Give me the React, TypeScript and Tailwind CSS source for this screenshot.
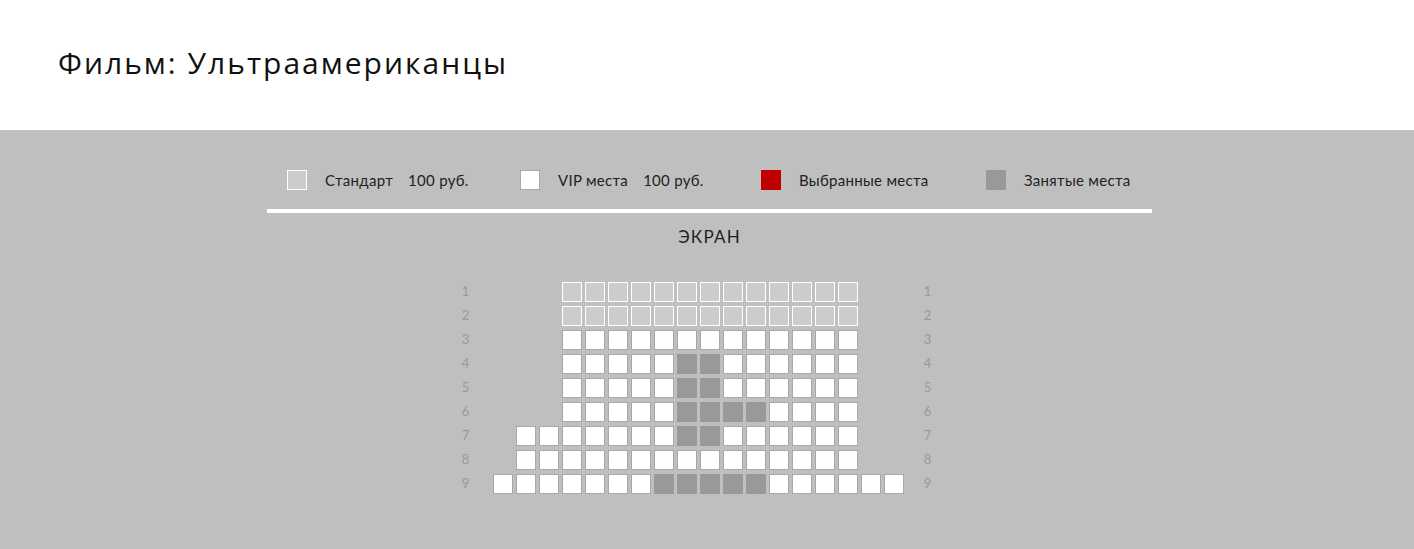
type SeatKind = 'none' | 'standart' | 'vip' | 'taken';

// 18 columns per row; each row lists its first/last column, the kind and the taken columns
const ROWS: { from: number; to: number; kind: SeatKind; taken?: number[] }[] = [
  { from: 4, to: 16, kind: 'standart' },
  { from: 4, to: 16, kind: 'standart' },
  { from: 4, to: 16, kind: 'vip' },
  { from: 4, to: 16, kind: 'vip', taken: [9, 10] },
  { from: 4, to: 16, kind: 'vip', taken: [9, 10] },
  { from: 4, to: 16, kind: 'vip', taken: [9, 10, 11, 12] },
  { from: 2, to: 16, kind: 'vip', taken: [9, 10] },
  { from: 2, to: 16, kind: 'vip' },
  { from: 1, to: 18, kind: 'vip', taken: [8, 9, 10, 11, 12] },
];

const COLS = Array.from({ length: 18 }, (_, i) => i + 1);

const SEAT_CLASS: Record<SeatKind, string> = {
  none: 'w-5 h-5',
  standart: 'w-5 h-5 bg-[#cccccc] border border-white',
  vip: 'w-5 h-5 bg-white border border-[#a9a9a9]',
  taken: 'w-5 h-5 bg-[#999999]',
};

function Seat({ kind }: { kind: SeatKind }) {
  return <div className={SEAT_CLASS[kind]} />;
}

export default function App() {
  return (
    <div className="min-h-[549px] flex flex-col font-['Lato','Liberation_Sans',sans-serif]">
      <header className="h-[130px] bg-white flex items-start pt-[41px] px-[58px]">
        <h1 className="font-['Open_Sans','Liberation_Sans',sans-serif] text-[30px] leading-[44px] tracking-[2px] text-[#111] font-normal">
          Фильм: Ультраамериканцы
        </h1>
      </header>

      <main className="flex-1 bg-[#bfbfbf] flex flex-col items-center">
        {/* legend */}
        <div className="w-[885px] ml-[5px] pt-[40px]">
          <div className="flex items-center h-5 pl-[20px] text-[15px] tracking-[0.3px] text-[#222]">
            <div className="w-[233px] flex items-center">
              <div className="w-5 h-5 bg-[#cccccc] border border-white" />
              <span className="ml-[18px]">Стандарт</span>
              <span className="ml-[15px]">100 руб.</span>
            </div>
            <div className="w-[241px] flex items-center">
              <div className="w-5 h-5 bg-white border border-[#a9a9a9]" />
              <span className="ml-[18px]">VIP места</span>
              <span className="ml-[15px]">100 руб.</span>
            </div>
            <div className="w-[225px] flex items-center">
              <div className="w-5 h-5 bg-[#c00000]" />
              <span className="ml-[18px]">Выбранные места</span>
            </div>
            <div className="flex items-center">
              <div className="w-5 h-5 bg-[#999999]" />
              <span className="ml-[18px]">Занятые места</span>
            </div>
          </div>
          <div className="mt-[19px] h-[4px] bg-white" />
          <div className="mt-[12px] text-center text-[17px] leading-6 text-[#222] tracking-[1.2px]">
            ЭКРАН
          </div>
        </div>

        {/* hall */}
        <div className="mt-[33px] pr-[21px] flex flex-col gap-y-[4px]">
          {ROWS.map((row, r) => (
            <div key={r} className="flex items-center h-5">
              <span className="w-5 mr-[17px] text-center text-[13px] text-[#999]">{r + 1}</span>
              <div className="flex gap-x-[3px]">
                {COLS.map((c) => {
                  let kind: SeatKind = 'none';
                  if (c >= row.from && c <= row.to) {
                    kind = row.taken?.includes(c) ? 'taken' : row.kind;
                  }
                  return <Seat key={c} kind={kind} />;
                })}
              </div>
              <span className="w-5 ml-[14px] text-center text-[13px] text-[#999]">{r + 1}</span>
            </div>
          ))}
        </div>
      </main>
    </div>
  );
}
